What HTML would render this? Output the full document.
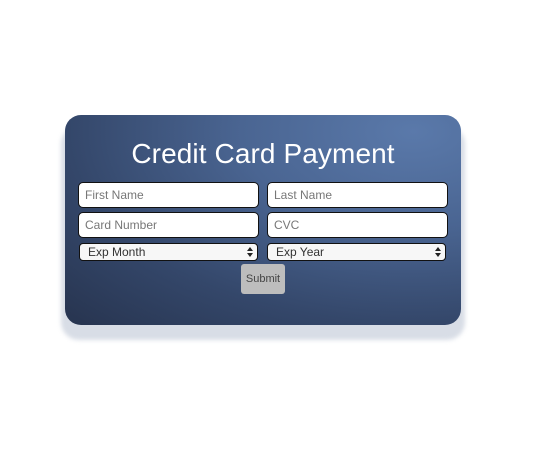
<!DOCTYPE html>
<html><head><style>
html,body{margin:0;padding:0;background:#fff;width:555px;height:475px;overflow:hidden;font-family:"Liberation Sans",sans-serif}
.shadow{position:absolute;left:61px;top:126px;width:404px;height:214px;border-radius:18px;background:#d8dde6;filter:blur(2px)}
.card{position:absolute;left:65px;top:115px;width:396px;height:210px;border-radius:16px;background:radial-gradient(ellipse at 88% 8%,#5a79aa 0%,#4a6592 35%,#34476a 70%,#27344f 100%)}
h1{position:absolute;left:0;width:396px;top:23px;margin:0;text-align:center;color:#fff;font-weight:normal;font-size:28px;letter-spacing:0.1px}
.in{position:absolute;background:#fff;border:1px solid #111;border-radius:5px;box-sizing:border-box;width:181px;height:26px;font-size:12px;color:#777;padding-left:6px;line-height:24px}
.sel{position:absolute;height:18px;width:179px;background:#f7f7f7;border:1px solid #111;border-radius:4px;box-sizing:border-box;font-size:12px;color:#333;padding-left:8px;line-height:16px}
.sel:after{content:"";position:absolute;right:4px;top:3px;border-left:3px solid transparent;border-right:3px solid transparent;border-bottom:4px solid #222}
.sel:before{content:"";position:absolute;right:4px;top:9px;border-left:3px solid transparent;border-right:3px solid transparent;border-top:4px solid #222}
.btn{position:absolute;left:176px;top:149px;width:44px;height:30px;background:#bdbdbd;border-radius:3px;font-size:11px;color:#444;text-align:center;line-height:30px}
</style></head><body>
<div class="shadow"></div>
<div class="card">
<h1>Credit Card Payment</h1>
<div class="in" style="left:13px;top:67px">First Name</div>
<div class="in" style="left:202px;top:67px">Last Name</div>
<div class="in" style="left:13px;top:97px">Card Number</div>
<div class="in" style="left:202px;top:97px">CVC</div>
<div class="sel" style="left:14px;top:128px">Exp Month</div>
<div class="sel" style="left:202px;top:128px">Exp Year</div>
<div class="btn">Submit</div>
</div>
</body></html>
